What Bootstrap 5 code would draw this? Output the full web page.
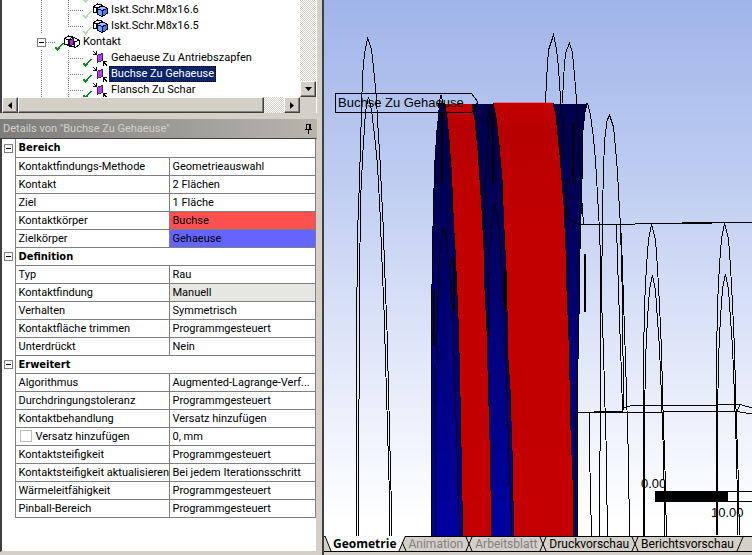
<!DOCTYPE html>
<html lang="de">
<head>
<meta charset="utf-8">
<meta name="viewport" content="width=device-width, initial-scale=1">
<title>Kontakt – Details</title>
<link href="https://cdn.jsdelivr.net/npm/bootstrap@5.3.0/dist/css/bootstrap.min.css" rel="stylesheet">
<style>
  :root { --face: #d4d0c8; --ui: Roboto, "Noto Sans", sans-serif; --ui-bold: "DejaVu Sans Condensed", "Noto Sans", sans-serif; }
  body { font-family: var(--ui); font-size: 11px; line-height: 16px; color: #000; background: var(--face); }
  button { font: inherit; color: inherit; }
  .sidebar { flex: 0 0 324px; border-right: 2px solid #404040; padding-right: 5px; padding-bottom: 3px; }
  .tree-panel { border-left: 2px solid #404040; border-right: 1px solid #fff; }
  .tree-body { height: 98px; margin-bottom: -1px; background: #fff; }
  .tree-row { height: 16px; flex: none; white-space: nowrap; }
  .g { flex: none; height: 16px; align-self: stretch; }
  .g-v { background: repeating-linear-gradient(#808080 0 1px, transparent 1px 2px) left top / 1px 100% no-repeat; }
  .g-h { background: repeating-linear-gradient(90deg, #808080 0 1px, transparent 1px 2px) left 8px / 100% 1px no-repeat; }
  .g-t { background: repeating-linear-gradient(#808080 0 1px, transparent 1px 2px) left top / 1px 100% no-repeat, repeating-linear-gradient(90deg, #808080 0 1px, transparent 1px 2px) left 8px / 100% 1px no-repeat; }
  .g-l { background: repeating-linear-gradient(#808080 0 1px, transparent 1px 2px) left top / 1px 8px no-repeat, repeating-linear-gradient(90deg, #808080 0 1px, transparent 1px 2px) left 8px / 100% 1px no-repeat; }
  .w-a { width: 39px; } .w-b { width: 27px; } .w-c { width: 15px; } .w-d { width: 35px; } .w-e { width: 9px; }
  .tree-label { padding: 0 2px; margin-left: 1px; line-height: 16px; text-decoration: none; color: #000; }
  .tree-label.picked { background: #0a246a; color: #fff; outline: 1px dotted #000; outline-offset: -1px; }
  .expander { width: 9px; height: 9px; padding: 0; border: 1px solid #808080; background: linear-gradient(#000, #000) center / 5px 1px no-repeat #fff; flex: none; display: block; }
  .sb-btn { width: 16px; height: 16px; padding: 0; flex: none; background: var(--face); border: 1px solid; border-color: #fff #404040 #404040 #fff; box-shadow: inset -1px -1px #808080; display: flex; align-items: center; justify-content: center; }
  .sb-track { background: repeating-conic-gradient(#fff 0 25%, var(--face) 0 50%) 0 0 / 2px 2px; }
  .sb-thumb { width: 80%; height: 16px; background: var(--face); border: 1px solid; border-color: #fff #404040 #404040 #fff; box-shadow: inset -1px -1px #808080; }
  .sb-row { position: relative; background: var(--face); }
  .pane-title { height: 19px; margin-top: 6px; padding: 0 4px 0 3px; color: var(--face); background: linear-gradient(90deg, #7c7c7c, #b8b5ae); }
  .details { border: solid; border-width: 1px 1px 1px 2px; border-color: #404040 var(--face) var(--face) #404040; background: #fff; }
  .props { width: 100%; table-layout: fixed; border-collapse: collapse; }
  .props td, .props th { height: 18px; padding: 0 0 0 3px; line-height: 17px; border: 1px solid #808080; border-top: 0; white-space: nowrap; overflow: hidden; font-weight: 400; }
  .props .gut { border: 0; padding: 0 0 0 2px; vertical-align: middle; }
  .props .sect { font-family: var(--ui-bold); font-weight: 700; }
  .props label { vertical-align: top; }
  .props .tick { appearance: none; width: 12px; height: 12px; margin: 2px 4px 0 1px; border: 1px solid #c0c0c0; background: #fff; vertical-align: top; }
  .c-red { background: #ff5050; } .c-blue { background: #6464ff; } .c-off { background: #e6e6e2; }
  .scene { background: linear-gradient(#9fb5e9, #bfcdf1 34%, #dee6f8 64%, #fff 97%); min-height: 0; }
  .scene svg { display: block; }
  .scene text { font-family: "Liberation Sans", Arial, sans-serif; font-size: 13px; }
  .tabs { height: 16px; border-top: 1px solid #000; border-bottom: 1px solid #000; font-size: 12px; }
  .tabs button { border: 0; padding: 0 2px; background: transparent; line-height: 14px; height: 14px; flex: none; white-space: nowrap; }
  .tabs button:disabled { color: #808080; }
  .tabs .on { background: #fff; font-family: "Open Sans", sans-serif; font-weight: 700; height: 15px; margin-top: -1px; padding: 1px 1px 0; }
  .tabs svg { flex: none; margin-top: -1px; }
  .foot { height: 3px; }
</style>
<script src="https://cdn.jsdelivr.net/npm/bootstrap@5.3.0/dist/js/bootstrap.bundle.min.js"></script>
</head>
<body>
<svg width="0" height="0" class="position-absolute" aria-hidden="true">
  <symbol id="tick" viewBox="0 0 9 9"><path d="M0 5h2v1h1v-1h1v-1h1v-1h1v-1h1v-1h2v1h-1v1h-1v1h-1v1h-1v2h-1v1h-1v1h-1v-1h-1v-1h-1z" fill="currentColor"/></symbol>
  <symbol id="body" viewBox="0 0 16 14">
    <path d="M1.500 3.500l4-2.500 4 1v3l-3 5-5-1z" fill="#fff" stroke="#000"/>
    <path d="M1.500 3.500l3 1.500v5M4.500 5l5-2" fill="none" stroke="#000"/>
    <path d="M5.500 5.500l5-2.500 4.500 2v5.500l-4.500 3-5-2.500z" fill="#4a7ee0" stroke="#000"/>
    <path d="M6 5.500l4.500-2 4 1.500-4 2z" fill="#9cc0ff"/>
    <path d="M6 6l4.500 2v5L6 11z" fill="#6ea0f8"/>
    <path d="M6 6l4.500 1.500L15 5.500M10.500 7.500V13" fill="none" stroke="#000050"/>
  </symbol>
  <symbol id="group" viewBox="0 0 16 14">
    <path d="M.5 3.500l4-2.500 4 1 6.500 3v5l-3.500 2.500-5-1.500-6-2z" fill="#fff" stroke="#000"/>
    <path d="M.5 3.500l4 1.500v5M4.500 5l4-3M10.500 7v5.500M10.500 7l4.500-2M8 5l2.500 2" fill="none" stroke="#000"/>
    <path d="M5 5.500L9.500 3v6L5 11.500z" fill="#a030d8" stroke="#300048"/>
  </symbol>
  <symbol id="pair" viewBox="0 0 15 15">
    <path d="M0 0h1v1h1v1h1V0h1v4H0V3h2V2H1V1H0z" fill="#000"/>
    <path d="M4.500 4.500l5-2v7l-5 2z" fill="#b040e8" stroke="#502070"/>
    <path d="M14 15h-1v-1h-1v-1h-1v2h-1v-5h4v1h-2v1h1v1h1z" fill="#000"/>
  </symbol>
</svg>

<div class="d-flex vh-100 overflow-hidden">
  <aside class="sidebar d-flex flex-column">
    <section class="tree-panel" aria-label="Strukturbaum">
      <div class="d-flex">
        <div class="tree-body flex-grow-1 overflow-hidden d-flex flex-column justify-content-end">
          <div class="tree-row d-flex align-items-center"><span class="g w-a"></span><span class="g g-v w-b"></span><span class="g g-t w-c"></span><svg width="9" height="9" class="mt-2" color="#bcdcbc" shape-rendering="crispEdges"><use href="#tick"/></svg></div>
          <div class="tree-row d-flex align-items-center"><span class="g w-a"></span><span class="g g-v w-b"></span><span class="g g-t w-c"></span><svg width="9" height="9" class="mt-2" color="#bcdcbc" shape-rendering="crispEdges"><use href="#tick"/></svg><svg width="16" height="14" shape-rendering="crispEdges"><use href="#body"/></svg><a class="tree-label" href="#">Iskt.Schr.M8x16.6</a></div>
          <div class="tree-row d-flex align-items-center"><span class="g w-a"></span><span class="g g-v w-b"></span><span class="g g-l w-c"></span><svg width="9" height="9" class="mt-2" color="#bcdcbc" shape-rendering="crispEdges"><use href="#tick"/></svg><svg width="16" height="14" shape-rendering="crispEdges"><use href="#body"/></svg><a class="tree-label" href="#">Iskt.Schr.M8x16.5</a></div>
          <div class="tree-row d-flex align-items-center"><span class="g w-d"></span><button class="expander" aria-label="Kontakt zuklappen"></button><span class="g g-h w-e"></span><svg width="9" height="9" class="mt-2" color="#109020" shape-rendering="crispEdges"><use href="#tick"/></svg><svg width="16" height="14" shape-rendering="crispEdges"><use href="#group"/></svg><a class="tree-label" href="#">Kontakt</a></div>
          <div class="tree-row d-flex align-items-center"><span class="g w-a"></span><span class="g g-v w-b"></span><span class="g g-t w-c"></span><svg width="9" height="9" class="mt-2" color="#109020" shape-rendering="crispEdges"><use href="#tick"/></svg><svg width="16" height="15" shape-rendering="crispEdges"><use href="#pair"/></svg><a class="tree-label" href="#">Gehaeuse Zu Antriebszapfen</a></div>
          <div class="tree-row d-flex align-items-center"><span class="g w-a"></span><span class="g g-v w-b"></span><span class="g g-t w-c"></span><svg width="9" height="9" class="mt-2" color="#109020" shape-rendering="crispEdges"><use href="#tick"/></svg><svg width="16" height="15" shape-rendering="crispEdges"><use href="#pair"/></svg><a class="tree-label picked" href="#">Buchse Zu Gehaeuse</a></div>
          <div class="tree-row d-flex align-items-center"><span class="g w-a"></span><span class="g g-v w-b"></span><span class="g g-t w-c"></span><svg width="9" height="9" class="mt-2" color="#109020" shape-rendering="crispEdges"><use href="#tick"/></svg><svg width="16" height="15" shape-rendering="crispEdges"><use href="#pair"/></svg><a class="tree-label" href="#">Flansch Zu Schar</a></div>
        </div>
        <div class="d-flex flex-column sb-track">
          <div class="flex-grow-1"></div>
          <button class="sb-btn" aria-label="Nach unten"><svg width="7" height="4"><path d="M0 0h7L3.500 4z"/></svg></button>
        </div>
      </div>
      <div class="sb-row d-flex">
        <button class="sb-btn" aria-label="Nach links"><svg width="4" height="7"><path d="M4 0v7L0 3.500z"/></svg></button>
        <div class="sb-track flex-grow-1 d-flex"><div class="sb-thumb flex-grow-1"></div><div class="px-2 me-1"></div></div>
        <button class="sb-btn" aria-label="Nach rechts"><svg width="4" height="7"><path d="M0 0v7l4-3.500z"/></svg></button>
        <div class="px-2"></div>
      </div>
    </section>

    <header class="pane-title d-flex align-items-center justify-content-between flex-shrink-0">
      <span>Details von "Buchse Zu Gehaeuse"</span>
      <svg width="9" height="10" shape-rendering="crispEdges"><path d="M2 0h5v5h1v1H5v4H4V6H1V5h1zM3 1v4h2V1z" fill="#000" fill-rule="evenodd"/></svg>
    </header>

    <section class="details flex-grow-1 overflow-hidden">
      <table class="props">
        <colgroup><col style="width:13px"><col style="width:154px"><col></colgroup>
        <tbody>
          <tr><td class="gut"><button class="expander" aria-label="Bereich zuklappen"></button></td><th class="sect" colspan="2">Bereich</th></tr>
          <tr><td class="gut"></td><th>Kontaktfindungs-Methode</th><td>Geometrieauswahl</td></tr>
          <tr><td class="gut"></td><th>Kontakt</th><td>2 Flächen</td></tr>
          <tr><td class="gut"></td><th>Ziel</th><td>1 Fläche</td></tr>
          <tr><td class="gut"></td><th>Kontaktkörper</th><td class="c-red">Buchse</td></tr>
          <tr><td class="gut"></td><th>Zielkörper</th><td class="c-blue">Gehaeuse</td></tr>
          <tr><td class="gut"><button class="expander" aria-label="Definition zuklappen"></button></td><th class="sect" colspan="2">Definition</th></tr>
          <tr><td class="gut"></td><th>Typ</th><td>Rau</td></tr>
          <tr><td class="gut"></td><th>Kontaktfindung</th><td class="c-off">Manuell</td></tr>
          <tr><td class="gut"></td><th>Verhalten</th><td>Symmetrisch</td></tr>
          <tr><td class="gut"></td><th>Kontaktfläche trimmen</th><td>Programmgesteuert</td></tr>
          <tr><td class="gut"></td><th>Unterdrückt</th><td>Nein</td></tr>
          <tr><td class="gut"><button class="expander" aria-label="Erweitert zuklappen"></button></td><th class="sect" colspan="2">Erweitert</th></tr>
          <tr><td class="gut"></td><th>Algorithmus</th><td>Augmented-Lagrange-Verf...</td></tr>
          <tr><td class="gut"></td><th>Durchdringungstoleranz</th><td>Programmgesteuert</td></tr>
          <tr><td class="gut"></td><th>Kontaktbehandlung</th><td>Versatz hinzufügen</td></tr>
          <tr><td class="gut"></td><th><input class="tick" type="checkbox" id="versatz"><label for="versatz">Versatz hinzufügen</label></th><td>0, mm</td></tr>
          <tr><td class="gut"></td><th>Kontaktsteifigkeit</th><td>Programmgesteuert</td></tr>
          <tr><td class="gut"></td><th>Kontaktsteifigkeit aktualisieren</th><td>Bei jedem Iterationsschritt</td></tr>
          <tr><td class="gut"></td><th>Wärmeleitfähigkeit</th><td>Programmgesteuert</td></tr>
          <tr><td class="gut"></td><th>Pinball-Bereich</th><td>Programmgesteuert</td></tr>
        </tbody>
      </table>
    </section>
  </aside>

  <main class="flex-grow-1 d-flex flex-column overflow-hidden">
    <div class="scene flex-grow-1 overflow-hidden">
      <svg width="100%" height="100%" viewBox="324 0 428 536" preserveAspectRatio="xMinYMin slice" role="img" aria-label="Geometrie">
        <defs>
          <linearGradient id="blue" x1="0" y1="103" x2="0" y2="536" gradientUnits="userSpaceOnUse"><stop offset="0" stop-color="#00004c"/><stop offset=".2" stop-color="#000054"/><stop offset=".6" stop-color="#000080"/><stop offset="1" stop-color="#0000a0"/></linearGradient>
          <linearGradient id="red" x1="0" y1="103" x2="0" y2="536" gradientUnits="userSpaceOnUse"><stop offset="0" stop-color="#c40000"/><stop offset=".06" stop-color="#b80000"/><stop offset=".3" stop-color="#c20000"/><stop offset="1" stop-color="#c40000"/></linearGradient>
        </defs>
        <g shape-rendering="crispEdges" fill="none" stroke="#000">
          <path fill="url(#blue)" stroke="none" d="M439 104H587L585 112 583 130 582 180 580 250 579 315 578 360 577 536H431V320L432 249 433 203 435 160 437 130z"/>
          <path fill="url(#red)" stroke="none" d="M445 104H472L475 120 478 150 480 180 482 210 484 250 485 290 487 330 488 370 490 440 491 490 492 536H463L462 500 460 418 458 330 455 258 453 225 451 173 449 140 447 118z"/>
          <path fill="url(#red)" stroke="none" d="M493 103H553L556 115 558 135 560 155 562 180 564 205 566 250 567 290 569 340 570 380 571 430 573 480 574 536H514L513 500 512 450 510 390 508 360 507 310 506 270 504 230 502 180 499 145 496 118z"/>
          <path stroke="#e08098" d="M493 102.500H553"/>
          <path d="M440 104L437 130 435 160 433.500 203 432.500 249 431.500 320V536"/>
          <path d="M441 103L445 104 447 118 449 140 451.500 173 453.500 225 455.500 258 458.500 330 460.500 418 462 500 463 536"/>
          <path d="M472 104L475 120 478 150 480 180 482 210 484 250 485 290 487 330 488 370 490 440 491 490 492 536"/>
          <path d="M493 103L496 118 499 145 502 180 504 230 506 270 507 310 508 360 510 390 512 450 513 500 514 536"/>
          <path d="M553 103L556 115 558 135 560 155 562 180 564 205 566 250 567 290 569 340 570 380 571 430 573 480 574 536"/>
          <path d="M587 103L585 112 583 130 582 180 580 250 579 315 578 360 577.500 536M575.500 412V536"/>
          <path d="M438 108L441 95 445 110"/>
          <path d="M490 110L488 140 486 180 485 250M487 125L489 110 493 104"/>
          <path stroke-width="2" d="M442 112V184M493 112V184M573 123V184M434 290V345M454 258V310M505 270V310"/>
          <path d="M435.500 536V380L437.500 320 438.500 275 440.500 245 443.500 227 446.500 240 449.500 270 452.500 310 454.500 370 456 420 458 490 460 536"/>
          <path d="M488 340L488.500 300 489.500 250 491.500 220 494.500 204 498.500 220 501.500 260 504.500 310 506.500 380 509 460 512 536"/>
          <!-- left spires -->
          <path d="M356.500 536V342L357.500 234 359.500 180 360.500 145 361.500 110 362.500 75 364.500 54 367.500 38 371.500 49 373.500 68 376.500 98 377.500 120 380 160 383 222 385 278 387 330 389 410 391 490 392 536"/>
          <path d="M358.500 536L359.500 270 361 190 363 150 365.500 112 368.500 97 371.500 110 374.500 135 377.500 165 380 212 382 262 384 310 385.500 360 387 410 389 480 390 536"/>
          <!-- rear wireframe -->
          <path d="M545.500 103L546.500 80 548.500 50 553.500 35 556.500 49 558.500 68 560.500 98 562.500 120 564 160"/>
          <path d="M562.500 103L563.500 78 565.500 53 569.500 43 572.500 53 574.500 75 576.500 100 578.500 140 580.500 180"/>
          <path d="M587.500 103L590.500 115 593.500 138 595.500 160 597.500 195 599.500 230 601 275 600.500 370 599.500 536"/>
          <path d="M607 121L609.500 115 613.500 127 615.500 148 617.500 172 619.500 210 621.500 240 623.500 300 625.500 360 627 410 628.500 460 629.500 536M607 121L605 137 603.500 165 602.500 215 601.500 300 603.500 350 604.500 390 606 440 607.500 536"/>
          <path d="M616.500 224L617.500 260 619.500 320 621.500 375 622.500 411M620.500 225L622.500 300 623.500 410"/>
          <path d="M581.500 196L583.500 224M566.500 180V217L575 223 580 224.500H596L752 222.500M682 222.500H722"/>
          <path d="M619 224.500H634"/>
          <path stroke-width="2" d="M585 254V312"/>
          <path d="M577 412.500H663.500M594 411.500H622.500M663 411.500H737L752 414M623.500 407H627L632 405.500H717L719 404.500H740L752 408M740 405L737 411M589.500 412V450L591.500 536"/>
          <path id="spire" d="M643.500 536V360L644.500 305 646.500 265 648.500 240 651.500 224 655.500 240 657.500 268 659.500 305 661.500 350 663 410 665 470 666.500 536M644.500 536V420L645.500 360 647.500 318 649.500 290 652.500 275 655.500 290 657.500 320 659.500 348 661 385 663 440 664 480 665 536"/>
          <use href="#spire" x="73" y="-1"/>
          <path d="M335.500 93.500H471.500L478 102 471.500 112.500H335.500z"/>
          <path d="M655.500 491.500H752M655.500 501.500H752"/>
          <path fill="#000" stroke="none" d="M655 491H728V502H655z"/>
        </g>
        <text x="338" y="107">Buchse Zu Gehaeuse</text>
        <text x="641" y="488">0.00</text>
        <text x="711" y="517">10.00</text>
      </svg>
    </div>
    <nav class="tabs d-flex flex-shrink-0" aria-label="Ansichten">
      <svg width="8" height="15"><path d="M1 0L7 15H8V0z" fill="#fff"/><path d="M1 0L7 15" stroke="#000"/></svg>
      <button class="on">Geometrie</button>
      <svg width="9" height="15"><path d="M0 0H7L1 15H0z" fill="#fff"/><path d="M7 .5H9M7 1L1 15M4 6L8 15" stroke="#000" fill="none"/></svg>
      <button disabled>Animation</button>
      <svg width="8" height="15"><path d="M0 .5H8M1 1L7 15M7 1L1 15" stroke="#000" fill="none"/></svg>
      <button disabled>Arbeitsblatt</button>
      <svg width="8" height="15"><path d="M0 .5H8M1 1L7 15M7 1L1 15" stroke="#000" fill="none"/></svg>
      <button>Druckvorschau</button>
      <svg width="8" height="15"><path d="M0 .5H8M1 1L7 15M7 1L1 15" stroke="#000" fill="none"/></svg>
      <button>Berichtsvorschau</button>
      <svg width="8" height="15"><path d="M0 .5H8M7 1L1 15" stroke="#000" fill="none"/></svg>
    </nav>
    <div class="foot flex-shrink-0"></div>
  </main>
</div>
</body>
</html>
